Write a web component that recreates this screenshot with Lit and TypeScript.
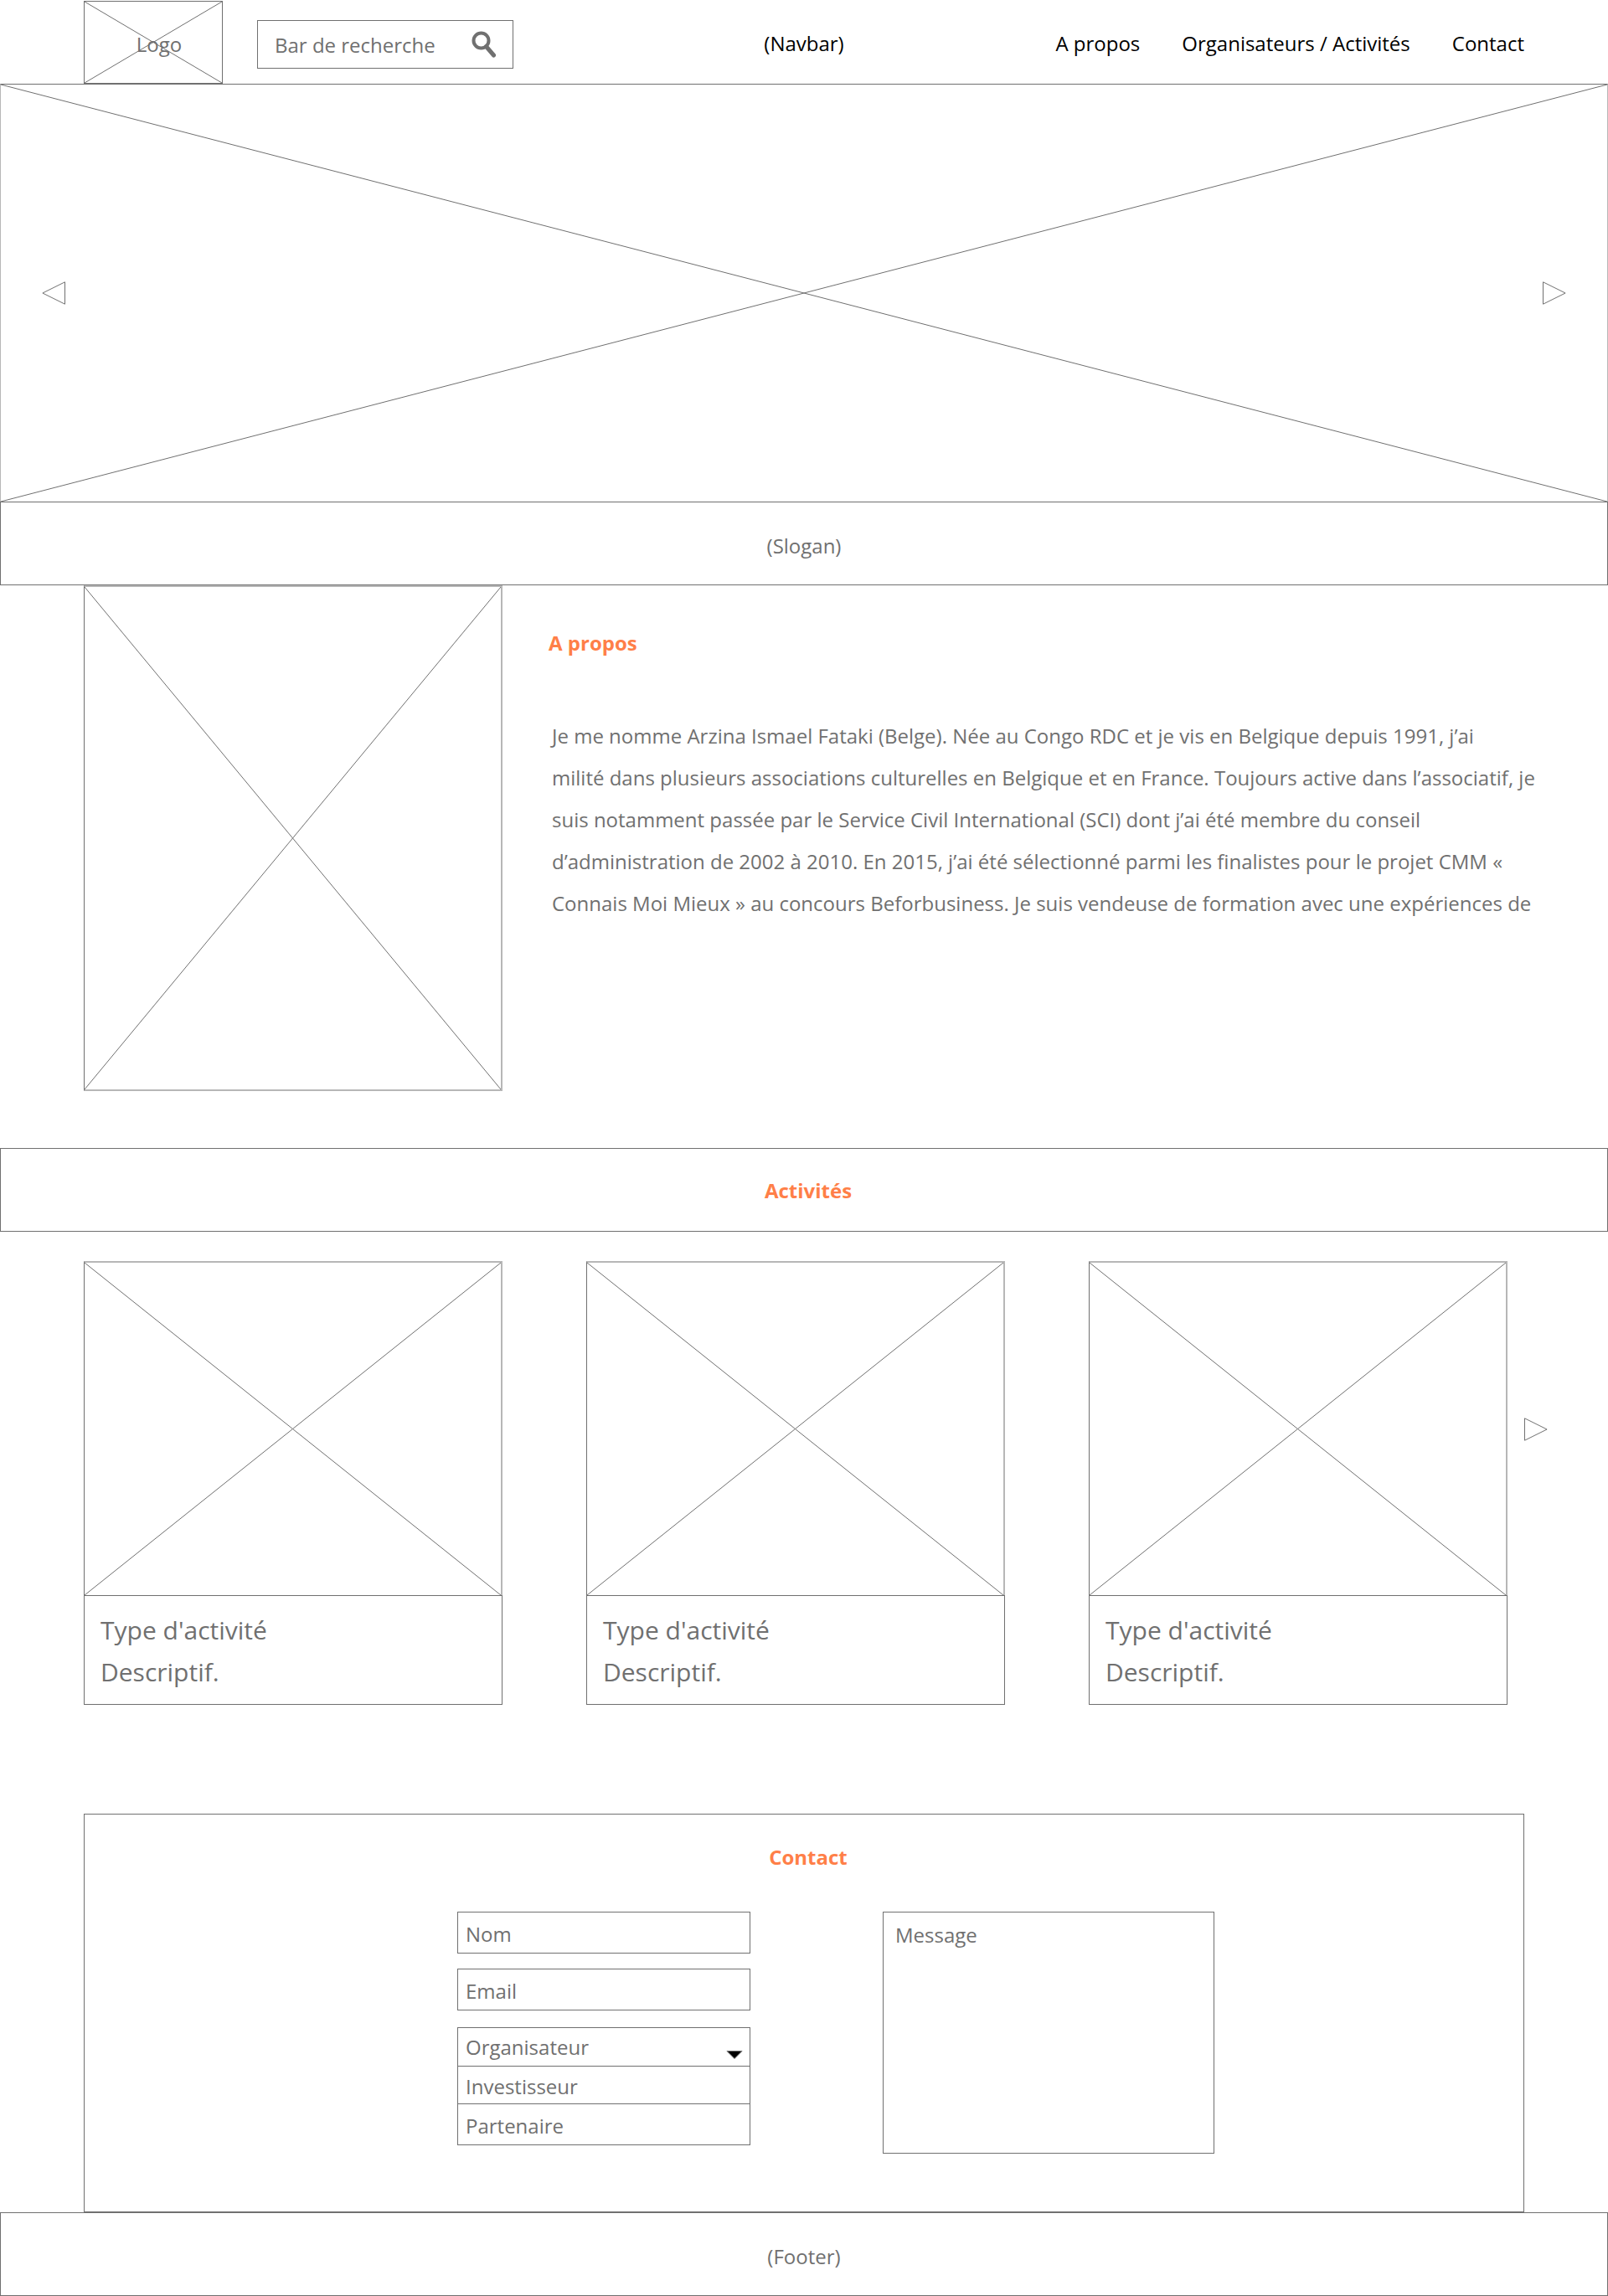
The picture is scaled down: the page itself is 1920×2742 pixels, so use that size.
import { LitElement, html, css, svg } from "lit";
import { customElement, property, state } from "lit/decorators.js";

/* Crossed box that stands in for a picture. */
@customElement("image-placeholder")
class ImagePlaceholder extends LitElement {
  static styles = css`
    :host {
      display: block;
      min-height: 0;
    }
    .cross {
      display: block;
      width: 100%;
      height: 100%;
    }
    .line {
      stroke: #707070;
      stroke-width: 1;
    }
  `;

  render() {
    return html`
      <svg class="cross" aria-hidden="true">
        <line class="line" x1="0" y1="0" x2="100%" y2="100%" />
        <line class="line" x1="0" y1="100%" x2="100%" y2="0" />
      </svg>
    `;
  }
}

/* Outlined triangle button used by the carousels. */
@customElement("arrow-button")
class ArrowButton extends LitElement {
  @property() direction: "left" | "right" = "right";
  @property() label = "";

  static styles = css`
    :host {
      display: block;
    }
    .button {
      display: block;
      padding: 0;
      border: 0;
      background: none;
      cursor: pointer;
    }
    .icon {
      display: block;
      width: 28px;
      height: 28px;
      fill: #fff;
      stroke: #707070;
      stroke-width: 1;
    }
  `;

  render() {
    const shape =
      this.direction === "left"
        ? svg`<path d="M27.5 0.8 V27.2 L0.9 14 Z" />`
        : svg`<path d="M0.5 0.8 V27.2 L27.1 14 Z" />`;
    return html`
      <button class="button" type="button" aria-label=${this.label}>
        <svg class="icon" viewBox="0 0 28 28">${shape}</svg>
      </button>
    `;
  }
}

@customElement("activity-card")
class ActivityCard extends LitElement {
  @property() heading = "";
  @property() text = "";

  static styles = css`
    .picture {
      height: 397px;
      border: solid #707070;
      border-width: 2px 2px 0 1px;
      border-top-color: #b7b7b7;
      border-right-color: #b7b7b7;
    }
    .body {
      padding: 16px 19px 13px;
      border: 1px solid #707070;
      font-size: 30px;
      line-height: 50px;
    }
    .heading,
    .text {
      margin: 0;
      font-size: inherit;
      font-weight: 400;
    }
  `;

  render() {
    return html`
      <article>
        <image-placeholder class="picture"></image-placeholder>
        <div class="body">
          <h3 class="heading">${this.heading}</h3>
          <p class="text">${this.text}</p>
        </div>
      </article>
    `;
  }
}

@customElement("contact-form")
class ContactForm extends LitElement {
  @state() private role = "Organisateur";

  private roles = ["Organisateur", "Investisseur", "Partenaire"];

  static styles = css`
    .form {
      display: flex;
      flex-wrap: wrap;
      justify-content: center;
      gap: 40px 158px;
      padding-left: 76px;
    }
    .fields {
      width: 350px;
    }
    .field,
    .select,
    .option,
    .message {
      display: block;
      box-sizing: border-box;
      width: 100%;
      margin: 0;
      border: 1px solid #707070;
      border-radius: 0;
      background: #fff;
      color: #707070;
      font: inherit;
      line-height: 32px;
      text-align: left;
    }
    .field {
      height: 50px;
      margin-bottom: 18px;
      padding: 6px 9px 4px;
    }
    .field::placeholder,
    .message::placeholder {
      color: #707070;
      opacity: 1;
    }
    .picker {
      display: grid;
      margin-top: 20px;
    }
    .select,
    .caret {
      grid-area: 1 / 1;
    }
    .select {
      height: 47px;
      padding: 0 40px 0 9px;
      appearance: none;
    }
    .caret {
      align-self: center;
      justify-self: end;
      width: 20px;
      height: 10px;
      margin: 18px 9px 0 0;
      pointer-events: none;
    }
    .option {
      height: 45px;
      padding: 3px 9px 0;
      border-top: 0;
    }
    .option:last-child {
      height: 49px;
    }
    .message {
      width: 396px;
      height: 289px;
      padding: 11px 14px;
      resize: none;
    }
  `;

  render() {
    return html`
      <form class="form">
        <div class="fields">
          <input class="field" type="text" aria-label="Nom" placeholder="Nom" />
          <input class="field" type="email" aria-label="Email" placeholder="Email" />
          <div class="picker">
            <select
              class="select"
              aria-label="Profil"
              .value=${this.role}
              @change=${(e: Event) => (this.role = (e.target as HTMLSelectElement).value)}
            >
              ${this.roles.map((r) => html`<option value=${r}>${r}</option>`)}
            </select>
            <svg class="caret" viewBox="0 0 20 10" aria-hidden="true">
              <path d="M1 0.5 H19 L10 9.5 Z" fill="#000" stroke="#707070" />
            </svg>
          </div>
          <div>
            ${this.roles.slice(1).map(
              (r) => html`
                <button class="option" type="button" @click=${() => (this.role = r)}>${r}</button>
              `
            )}
          </div>
        </div>
        <textarea class="message" aria-label="Message" placeholder="Message"></textarea>
      </form>
    `;
  }
}

@customElement("app-root")
class AppRoot extends LitElement {
  static styles = css`
    :host {
      display: block;
      background: #fff;
      color: #707070;
      font-family: "Open Sans", "Noto Sans", sans-serif;
      font-size: 24px;
      line-height: 32px;
    }
    .navbar {
      display: grid;
      grid-template-columns: 1fr auto 1fr;
      align-items: center;
      height: 100px;
      padding: 0 100px;
      color: #000;
    }
    .start {
      display: flex;
      align-items: center;
      gap: 41px;
    }
    .logo {
      display: grid;
      grid-template-rows: minmax(0, 1fr);
      box-sizing: border-box;
      width: 166px;
      height: 99px;
      margin-top: 1px;
      border: 1px solid #707070;
      color: #707070;
      text-decoration: none;
    }
    .logo-cross,
    .logo-text {
      grid-area: 1 / 1;
    }
    .logo-text {
      place-self: center;
      padding: 4px 0 0 14px;
    }
    .search {
      display: flex;
      align-items: center;
      box-sizing: border-box;
      width: 306px;
      height: 58px;
      margin-top: 6px;
      padding: 0 18px 0 20px;
      border: 1px solid #707070;
    }
    .search-input {
      flex: 1;
      min-width: 0;
      padding: 2px 0 0;
      border: 0;
      background: none;
      color: #707070;
      font: inherit;
    }
    .search-input::placeholder {
      color: #707070;
      opacity: 1;
    }
    .search-button {
      display: block;
      padding: 0;
      border: 0;
      background: none;
    }
    .search-icon {
      display: block;
      width: 32px;
      height: 32px;
      fill: none;
      stroke: #707070;
    }
    .caption,
    .links {
      padding-top: 4px;
    }
    .links {
      display: flex;
      justify-content: flex-end;
      gap: 50px;
    }
    .link {
      color: #000;
      text-decoration: none;
    }
    .hero {
      display: grid;
    }
    .hero-picture,
    .hero-controls {
      grid-area: 1 / 1;
    }
    .hero-picture {
      height: 498px;
      border: 1px solid #b7b7b7;
      border-top-color: #707070;
      border-bottom: 0;
    }
    .hero-controls {
      display: flex;
      justify-content: space-between;
      align-items: center;
      padding: 0 50px;
    }
    .band {
      display: flex;
      align-items: center;
      justify-content: center;
      box-sizing: border-box;
      height: 100px;
      padding-top: 6px;
      border: 1px solid #707070;
    }
    .title {
      margin: 0;
      color: #ff7f48;
      font-size: 24px;
      font-weight: 700;
      line-height: 32px;
    }
    .about {
      display: flex;
      gap: 55px;
      padding: 0 72px 68px 100px;
    }
    .portrait {
      flex: 0 0 497px;
      height: 600px;
      border: 2px solid #b7b7b7;
      border-left: 1px solid #707070;
    }
    .about-text {
      padding-top: 53px;
    }
    .paragraph {
      margin: 0;
      padding: 70px 0 0 4px;
      line-height: 50px;
    }
    .activities-title {
      padding: 0 0 4px 10px;
    }
    .activities {
      display: flex;
      align-items: center;
      gap: 20px;
      padding: 35px 72px 130px 100px;
    }
    .cards {
      display: grid;
      flex: 1;
      grid-template-columns: repeat(3, 1fr);
      gap: 100px;
    }
    .next {
      padding-bottom: 129px;
    }
    .contact {
      margin: 0 100px;
      padding: 35px 0 69px;
      border: 1px solid #707070;
    }
    .contact-title {
      padding: 0 0 49px 10px;
      text-align: center;
    }
  `;

  render() {
    return html`
      <header class="navbar">
        <div class="start">
          <a class="logo" href="#">
            <image-placeholder class="logo-cross"></image-placeholder>
            <span class="logo-text">Logo</span>
          </a>
          <form class="search" role="search">
            <input
              class="search-input"
              type="text"
              aria-label="Bar de recherche"
              placeholder="Bar de recherche"
            />
            <button class="search-button" type="button" aria-label="Rechercher">
              <svg class="search-icon" viewBox="0 0 32 32">
                <circle cx="12.5" cy="11.5" r="9" stroke-width="4" />
                <path d="M18.5 18.5 L27.5 29" stroke-width="5" stroke-linecap="round" />
              </svg>
            </button>
          </form>
        </div>
        <span class="caption">(Navbar)</span>
        <nav class="links">
          <a class="link" href="#a-propos">A propos</a>
          <a class="link" href="#activites">Organisateurs / Activités</a>
          <a class="link" href="#contact">Contact</a>
        </nav>
      </header>

      <main>
        <section class="hero">
          <image-placeholder class="hero-picture"></image-placeholder>
          <div class="hero-controls">
            <arrow-button direction="left" label="Précédent"></arrow-button>
            <arrow-button direction="right" label="Suivant"></arrow-button>
          </div>
        </section>
        <div class="band">(Slogan)</div>

        <section class="about" id="a-propos">
          <image-placeholder class="portrait"></image-placeholder>
          <div class="about-text">
            <h2 class="title">A propos</h2>
            <p class="paragraph">
              Je me nomme Arzina Ismael Fataki (Belge). Née au Congo RDC et je vis en Belgique depuis 1991, j’ai<br />
              milité dans plusieurs associations culturelles en Belgique et en France. Toujours active dans l’associatif, je<br />
              suis notamment passée par le Service Civil International (SCI) dont j’ai été membre du conseil<br />
              d’administration de 2002 à 2010. En 2015, j’ai été sélectionné parmi les finalistes pour le projet CMM «<br />
              Connais Moi Mieux » au concours Beforbusiness. Je suis vendeuse de formation avec une expériences de
            </p>
          </div>
        </section>

        <div class="band" id="activites"><h2 class="title activities-title">Activités</h2></div>
        <section class="activities">
          <div class="cards">
            ${[1, 2, 3].map(
              () => html`<activity-card heading="Type d'activité" text="Descriptif."></activity-card>`
            )}
          </div>
          <arrow-button class="next" direction="right" label="Activités suivantes"></arrow-button>
        </section>

        <section class="contact" id="contact">
          <h2 class="title contact-title">Contact</h2>
          <contact-form></contact-form>
        </section>
      </main>

      <footer class="band">(Footer)</footer>
    `;
  }
}
